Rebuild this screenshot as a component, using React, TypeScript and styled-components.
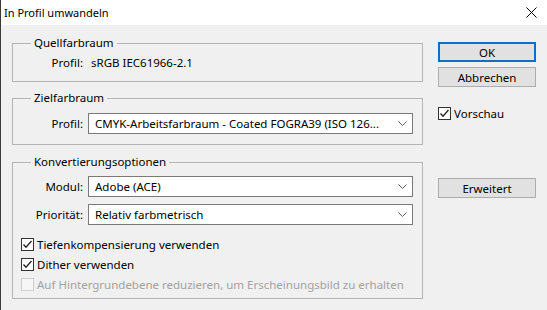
import React from 'react';
import styled, { createGlobalStyle } from 'styled-components';

const GlobalStyle = createGlobalStyle`
  html, body {
    margin: 0;
    padding: 0;
    background: #f0f0f0;
  }
  body {
    font-family: "Noto Sans", "Liberation Sans", sans-serif;
    font-size: 11.5px;
    color: #000;
  }
`;

const Window = styled.div`
  width: 547px;
  height: 310px;
  box-sizing: border-box;
  border-left: 1px solid #3a3a3a;
  background: #f0f0f0;
  display: flex;
  flex-direction: column;
  overflow: hidden;
`;

const TitleBar = styled.div`
  height: 25px;
  flex: none;
  background: #ffffff;
  display: flex;
  align-items: center;
  justify-content: space-between;
  padding: 0 10px 0 3px;
  font-size: 11px;
`;

const Body = styled.div`
  display: flex;
  padding: 11px 0 0 11px;
`;

const LeftColumn = styled.div`
  width: 411px;
  display: flex;
  flex-direction: column;
`;

const Group = styled.fieldset<{ $pt: number; $pb: number; $mt?: number }>`
  margin: ${(p) => p.$mt ?? 0}px 0 0 0;
  min-width: 0;
  border: 1px solid #b4b4b4;
  padding: ${(p) => p.$pt}px 9px ${(p) => p.$pb}px 8px;
  display: flex;
  flex-direction: column;
`;

const Legend = styled.legend`
  margin-left: 10px;
  padding: 0 3px;
  line-height: 14px;
  font-size: 11.5px;
`;

const FieldRow = styled.div<{ $mt?: number }>`
  display: grid;
  grid-template-columns: 62px 325px;
  column-gap: 5px;
  align-items: center;
  margin-top: ${(p) => p.$mt ?? 0}px;
`;

const Label = styled.span`
  text-align: right;
  line-height: 16px;
`;

const Value = styled.span`
  padding-left: 3px;
  line-height: 16px;
`;

const Select = styled.div`
  height: 21px;
  box-sizing: border-box;
  border: 1px solid #7a7a7a;
  background: #ffffff;
  display: flex;
  align-items: center;
  justify-content: space-between;
  padding: 0 5px 0 6px;
  white-space: nowrap;
`;

const CheckRow = styled.label<{ $disabled?: boolean; $mt?: number }>`
  display: flex;
  align-items: center;
  gap: 3px;
  height: 20px;
  margin-top: ${(p) => p.$mt ?? 0}px;
  white-space: nowrap;
  color: ${(p) => (p.$disabled ? '#a2a2a2' : '#000')};
`;

const Box = styled.span<{ $disabled?: boolean }>`
  width: 13px;
  height: 13px;
  flex: none;
  box-sizing: border-box;
  border: 1px solid ${(p) => (p.$disabled ? '#cfcfcf' : '#333333')};
  background: ${(p) => (p.$disabled ? '#f6f6f6' : '#ffffff')};
  display: flex;
  align-items: center;
  justify-content: center;
`;

const RightColumn = styled.div`
  width: 98px;
  margin-left: 15px;
  padding-top: 6px;
  display: flex;
  flex-direction: column;
`;

const Button = styled.button<{ $primary?: boolean; $mt?: number }>`
  height: 20px;
  box-sizing: border-box;
  margin: ${(p) => p.$mt ?? 0}px 0 0 0;
  padding: 0;
  border: ${(p) => (p.$primary ? '2px solid #0f6fc6' : '1px solid #adadad')};
  background: #e1e1e1;
  font-family: inherit;
  font-size: 11.5px;
  color: #000;
`;

const Chevron = () => (
  <svg width="9" height="5" viewBox="0 0 9 5">
    <polyline points="0.5,0.5 4.5,4.5 8.5,0.5" fill="none" stroke="#606060" strokeWidth="1" />
  </svg>
);

const Check = () => (
  <svg width="11" height="11" viewBox="0 0 11 11">
    <polyline points="1.5,5.5 4,8.2 9.5,2" fill="none" stroke="#222" strokeWidth="1.3" />
  </svg>
);

const CheckBox: React.FC<{ checked?: boolean; disabled?: boolean; text: string; mt?: number }> = ({
  checked,
  disabled,
  text,
  mt,
}) => (
  <CheckRow $disabled={disabled} $mt={mt}>
    <Box $disabled={disabled}>{checked && <Check />}</Box>
    {text}
  </CheckRow>
);

const App: React.FC = () => {
  return (
    <>
      <GlobalStyle />
      <Window>
        <TitleBar>
          <span>In Profil umwandeln</span>
          <svg width="11" height="11" viewBox="0 0 11 11">
            <path d="M0.5 0.5 L10.5 10.5 M10.5 0.5 L0.5 10.5" stroke="#000" strokeWidth="1" />
          </svg>
        </TitleBar>
        <Body>
          <LeftColumn>
            <Group $pt={5} $pb={10}>
              <Legend>Quellfarbraum</Legend>
              <FieldRow>
                <Label>Profil:</Label>
                <Value>sRGB IEC61966-2.1</Value>
              </FieldRow>
            </Group>

            <Group $pt={8} $pb={10} $mt={9}>
              <Legend>Zielfarbraum</Legend>
              <FieldRow>
                <Label>Profil:</Label>
                <Select>
                  CMYK-Arbeitsfarbraum - Coated FOGRA39 (ISO 126...
                  <Chevron />
                </Select>
              </FieldRow>
            </Group>

            <Group $pt={7} $pb={4} $mt={10}>
              <Legend>Konvertierungsoptionen</Legend>
              <FieldRow>
                <Label>Modul:</Label>
                <Select>
                  Adobe (ACE)
                  <Chevron />
                </Select>
              </FieldRow>
              <FieldRow $mt={7}>
                <Label>Priorität:</Label>
                <Select>
                  Relativ farbmetrisch
                  <Chevron />
                </Select>
              </FieldRow>
              <CheckBox checked text="Tiefenkompensierung verwenden" mt={9} />
              <CheckBox checked text="Dither verwenden" />
              <CheckBox disabled text="Auf Hintergrundebene reduzieren, um Erscheinungsbild zu erhalten" />
            </Group>
          </LeftColumn>

          <RightColumn>
            <Button $primary>OK</Button>
            <Button $mt={5}>Abbrechen</Button>
            <CheckBox checked text="Vorschau" mt={16} />
            <Button $mt={55}>Erweitert</Button>
          </RightColumn>
        </Body>
      </Window>
    </>
  );
};

export default App;
